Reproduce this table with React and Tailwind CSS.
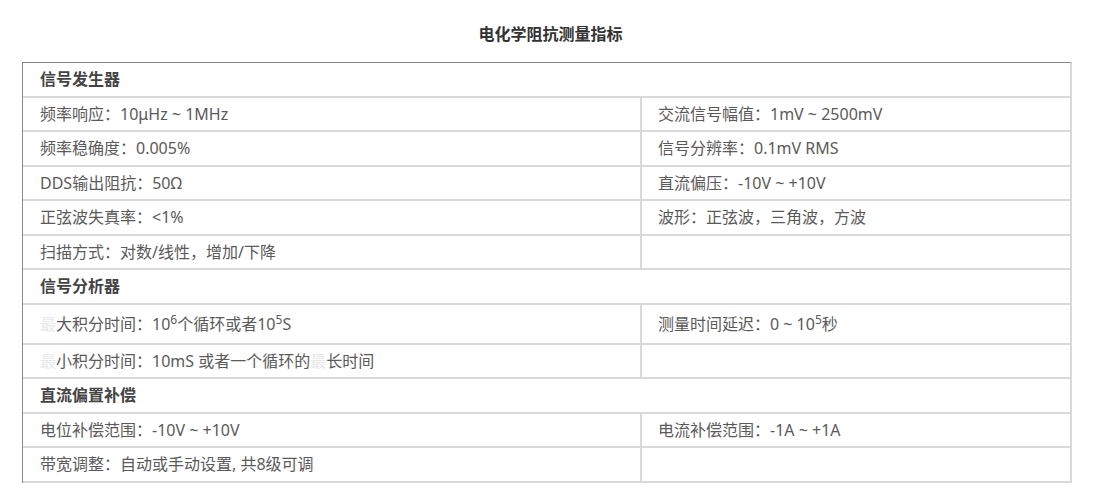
import React from "react";

const Blot = ({ children }) => <span className="text-[#e8e8e8]">{children}</span>;

const sections = [
  {
    title: "信号发生器",
    rows: [
      ["频率响应：10μHz ~ 1MHz", "交流信号幅值：1mV ~ 2500mV"],
      ["频率稳确度：0.005%", "信号分辨率：0.1mV RMS"],
      ["DDS输出阻抗：50Ω", "直流偏压：-10V ~ +10V"],
      ["正弦波失真率：<1%", "波形：正弦波，三角波，方波"],
      ["扫描方式：对数/线性，增加/下降", ""],
    ],
  },
  {
    title: "信号分析器",
    rows: [
      [
        <>
          <Blot>最</Blot>大积分时间：10<sup className="text-[12px]">6</sup>个循环或者10<sup className="text-[12px]">5</sup>S
        </>,
        <>
          测量时间延迟：0 ~ 10<sup className="text-[12px]">5</sup>秒
        </>,
        "tall",
      ],
      [
        <>
          <Blot>最</Blot>小积分时间：10mS 或者一个循环的<Blot>最</Blot>长时间
        </>,
        "",
      ],
    ],
  },
  {
    title: "直流偏置补偿",
    rows: [
      ["电位补偿范围：-10V ~ +10V", "电流补偿范围：-1A ~ +1A"],
      ["带宽调整：自动或手动设置, 共8级可调", ""],
    ],
  },
];

export default function App() {
  return (
    <div
      className="w-[1101px] h-[490px] bg-white pt-[24px]"
      style={{ fontFamily: '"Noto Sans", "Noto Sans CJK SC", sans-serif' }}
    >
      <h1 className="text-center text-[16px] leading-[20px] font-bold text-[#333]">电化学阻抗测量指标</h1>
      <div className="mt-[18px] ml-[22px] w-[1050px] border-l border-t border-l-[#8a8a8a] border-t-[#8a8a8a] border-r-2 border-r-[#d9d9d9] text-[16px] leading-[22px] text-[#5a5a5a]">
        {sections.map((s) => (
          <div key={s.title}>
            <div className="h-[34.5px] flex items-center pl-[17px] border-b-2 border-[#d9d9d9] font-bold text-[#444]">
              {s.title}
            </div>
            {s.rows.map((r, i) => (
              <div
                key={i}
                className={
                  "flex border-b-2 border-[#d9d9d9] " + (r[2] === "tall" ? "h-[40px]" : "h-[34.5px]")
                }
              >
                <div className="w-[619px] shrink-0 flex items-center pl-[17px] border-r-2 border-[#d9d9d9]">
                  <span>{r[0]}</span>
                </div>
                <div className="flex-1 flex items-center pl-[16px]">
                  <span>{r[1]}</span>
                </div>
              </div>
            ))}
          </div>
        ))}
      </div>
    </div>
  );
}
